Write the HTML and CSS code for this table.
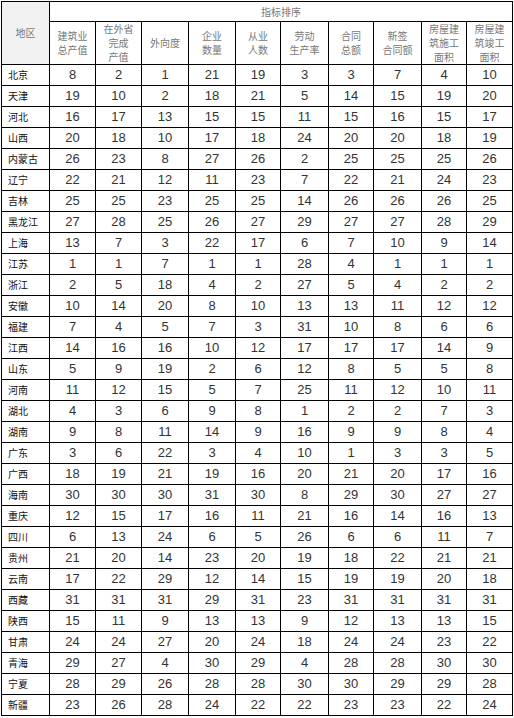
FILE: index.html
```html
<!DOCTYPE html>
<html lang="zh">
<head>
<meta charset="utf-8">
<link rel="stylesheet" href="styles.css">
</head>
<body>
<table class="rank">
<colgroup>
<col class="w48"><col class="w46"><col class="w46"><col class="w47"><col class="w47"><col class="w45"><col class="w48"><col class="w45"><col class="w48"><col class="w45"><col class="w46">
</colgroup>
<thead>
<tr class="h-top">
<th class="region-head" rowspan="2">地区</th>
<th class="group-head" colspan="10">指标排序</th>
</tr>
<tr class="h-sub">
<th><div class="lbl">建筑业<br>总产值</div></th>
<th><div class="lbl">在外省<br>完成<br>产值</div></th>
<th><div class="lbl">外向度</div></th>
<th><div class="lbl">企业<br>数量</div></th>
<th><div class="lbl">从业<br>人数</div></th>
<th><div class="lbl">劳动<br>生产率</div></th>
<th><div class="lbl">合同<br>总额</div></th>
<th><div class="lbl">新签<br>合同额</div></th>
<th><div class="lbl">房屋建<br>筑施工<br>面积</div></th>
<th><div class="lbl">房屋建<br>筑竣工<br>面积</div></th>
</tr>
</thead>
<tbody>
<tr><td>北京</td><td>8</td><td>2</td><td>1</td><td>21</td><td>19</td><td>3</td><td>3</td><td>7</td><td>4</td><td>10</td></tr>
<tr><td>天津</td><td>19</td><td>10</td><td>2</td><td>18</td><td>21</td><td>5</td><td>14</td><td>15</td><td>19</td><td>20</td></tr>
<tr><td>河北</td><td>16</td><td>17</td><td>13</td><td>15</td><td>15</td><td>11</td><td>15</td><td>16</td><td>15</td><td>17</td></tr>
<tr><td>山西</td><td>20</td><td>18</td><td>10</td><td>17</td><td>18</td><td>24</td><td>20</td><td>20</td><td>18</td><td>19</td></tr>
<tr><td>内蒙古</td><td>26</td><td>23</td><td>8</td><td>27</td><td>26</td><td>2</td><td>25</td><td>25</td><td>25</td><td>26</td></tr>
<tr><td>辽宁</td><td>22</td><td>21</td><td>12</td><td>11</td><td>23</td><td>7</td><td>22</td><td>21</td><td>24</td><td>23</td></tr>
<tr><td>吉林</td><td>25</td><td>25</td><td>23</td><td>25</td><td>25</td><td>14</td><td>26</td><td>26</td><td>26</td><td>25</td></tr>
<tr><td>黑龙江</td><td>27</td><td>28</td><td>25</td><td>26</td><td>27</td><td>29</td><td>27</td><td>27</td><td>28</td><td>29</td></tr>
<tr><td>上海</td><td>13</td><td>7</td><td>3</td><td>22</td><td>17</td><td>6</td><td>7</td><td>10</td><td>9</td><td>14</td></tr>
<tr><td>江苏</td><td>1</td><td>1</td><td>7</td><td>1</td><td>1</td><td>28</td><td>4</td><td>1</td><td>1</td><td>1</td></tr>
<tr><td>浙江</td><td>2</td><td>5</td><td>18</td><td>4</td><td>2</td><td>27</td><td>5</td><td>4</td><td>2</td><td>2</td></tr>
<tr><td>安徽</td><td>10</td><td>14</td><td>20</td><td>8</td><td>10</td><td>13</td><td>13</td><td>11</td><td>12</td><td>12</td></tr>
<tr><td>福建</td><td>7</td><td>4</td><td>5</td><td>7</td><td>3</td><td>31</td><td>10</td><td>8</td><td>6</td><td>6</td></tr>
<tr><td>江西</td><td>14</td><td>16</td><td>16</td><td>10</td><td>12</td><td>17</td><td>17</td><td>17</td><td>14</td><td>9</td></tr>
<tr><td>山东</td><td>5</td><td>9</td><td>19</td><td>2</td><td>6</td><td>12</td><td>8</td><td>5</td><td>5</td><td>8</td></tr>
<tr><td>河南</td><td>11</td><td>12</td><td>15</td><td>5</td><td>7</td><td>25</td><td>11</td><td>12</td><td>10</td><td>11</td></tr>
<tr><td>湖北</td><td>4</td><td>3</td><td>6</td><td>9</td><td>8</td><td>1</td><td>2</td><td>2</td><td>7</td><td>3</td></tr>
<tr><td>湖南</td><td>9</td><td>8</td><td>11</td><td>14</td><td>9</td><td>16</td><td>9</td><td>9</td><td>8</td><td>4</td></tr>
<tr><td>广东</td><td>3</td><td>6</td><td>22</td><td>3</td><td>4</td><td>10</td><td>1</td><td>3</td><td>3</td><td>5</td></tr>
<tr><td>广西</td><td>18</td><td>19</td><td>21</td><td>19</td><td>16</td><td>20</td><td>21</td><td>20</td><td>17</td><td>16</td></tr>
<tr><td>海南</td><td>30</td><td>30</td><td>30</td><td>31</td><td>30</td><td>8</td><td>29</td><td>30</td><td>27</td><td>27</td></tr>
<tr><td>重庆</td><td>12</td><td>15</td><td>17</td><td>16</td><td>11</td><td>21</td><td>16</td><td>14</td><td>16</td><td>13</td></tr>
<tr><td>四川</td><td>6</td><td>13</td><td>24</td><td>6</td><td>5</td><td>26</td><td>6</td><td>6</td><td>11</td><td>7</td></tr>
<tr><td>贵州</td><td>21</td><td>20</td><td>14</td><td>23</td><td>20</td><td>19</td><td>18</td><td>22</td><td>21</td><td>21</td></tr>
<tr><td>云南</td><td>17</td><td>22</td><td>29</td><td>12</td><td>14</td><td>15</td><td>19</td><td>19</td><td>20</td><td>18</td></tr>
<tr><td>西藏</td><td>31</td><td>31</td><td>31</td><td>29</td><td>31</td><td>23</td><td>31</td><td>31</td><td>31</td><td>31</td></tr>
<tr><td>陕西</td><td>15</td><td>11</td><td>9</td><td>13</td><td>13</td><td>9</td><td>12</td><td>13</td><td>13</td><td>15</td></tr>
<tr><td>甘肃</td><td>24</td><td>24</td><td>27</td><td>20</td><td>24</td><td>18</td><td>24</td><td>24</td><td>23</td><td>22</td></tr>
<tr><td>青海</td><td>29</td><td>27</td><td>4</td><td>30</td><td>29</td><td>4</td><td>28</td><td>28</td><td>30</td><td>30</td></tr>
<tr><td>宁夏</td><td>28</td><td>29</td><td>26</td><td>28</td><td>28</td><td>30</td><td>30</td><td>29</td><td>29</td><td>28</td></tr>
<tr><td>新疆</td><td>23</td><td>26</td><td>28</td><td>24</td><td>22</td><td>22</td><td>23</td><td>23</td><td>22</td><td>24</td></tr>
</tbody>
</table>
</body>
</html>
```
FILE: styles.css
```css
html, body {
  margin: 0;
  padding: 0;
  background: #fff;
}
body {
  padding: 1px 0 0 1px;
  font-family: "Liberation Sans", "Noto Sans CJK SC", sans-serif;
}
.rank {
  border-collapse: collapse;
  table-layout: fixed;
  width: 512px;
}
.w45 { width: 45px; }
.w46 { width: 46px; }
.w47 { width: 47px; }
.w48 { width: 48px; }
.rank th, .rank td {
  border: 1px solid #000;
  padding: 0;
  overflow: hidden;
}
.rank th {
  font-family: "Noto Sans CJK SC", sans-serif;
  font-weight: normal;
  font-size: 10px;
  line-height: 14px;
  color: #777;
  text-align: center;
  vertical-align: middle;
}
.lbl {
  line-height: 14px;
  white-space: nowrap;
}
.h-top { height: 20px; }
.h-sub { height: 43px; }
.region-head {
  background: #f2f2f2;
}
.group-head {
  text-align: center;
}
.rank tbody tr { height: 21px; }
.rank td {
  font-size: 13px;
  line-height: 20px;
  color: #333;
  text-align: center;
  vertical-align: middle;
}
.rank td:first-child {
  font-family: "Noto Sans CJK SC", sans-serif;
  font-size: 10px;
  text-align: left;
  padding-left: 6px;
  color: #111;
}
```
